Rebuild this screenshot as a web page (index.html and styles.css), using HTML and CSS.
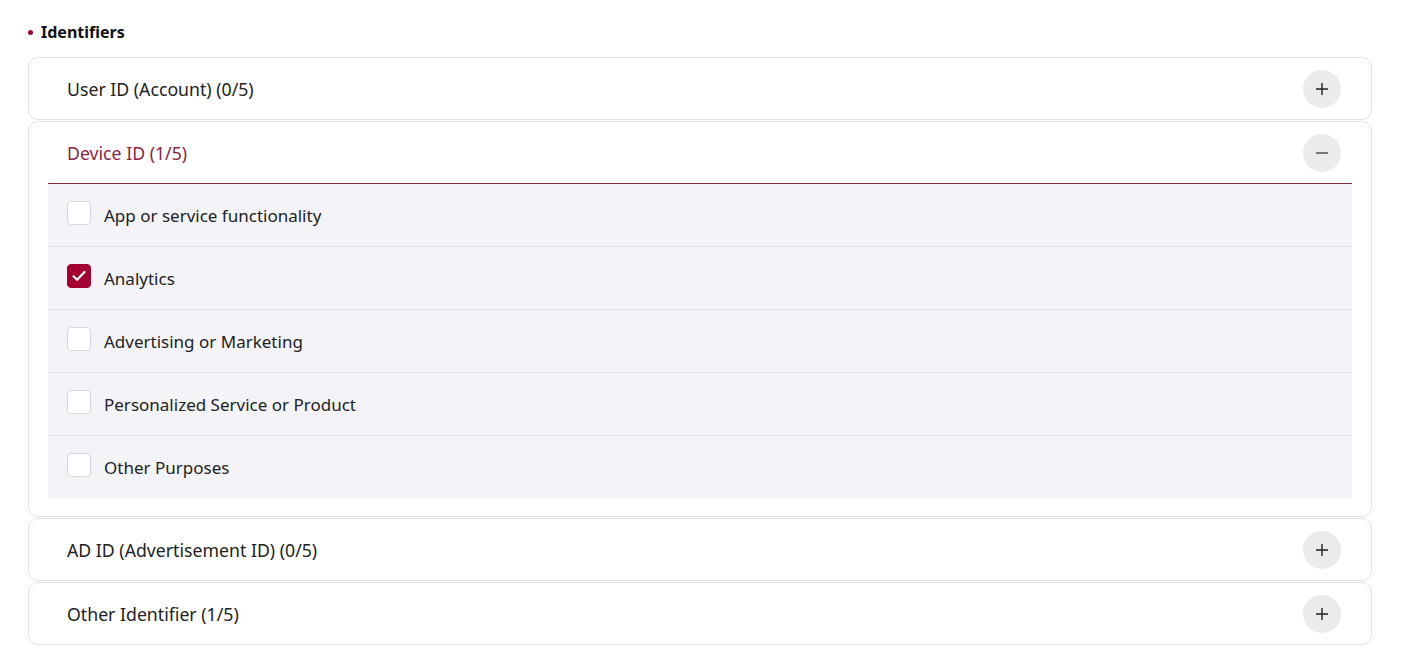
FILE: index.html
```html
<!DOCTYPE html>
<html lang="en">
  <head>
    <meta charset="UTF-8">
    <title>Identifiers</title>
    <link rel="stylesheet" href="styles.css">
  </head>
  <body>
    <div class="section">
      <h3 class="section-title">Identifiers</h3>

      <div class="acc-item">
        <div class="acc-head">
          <span class="acc-title">User ID (Account) (0/5)</span>
          <button class="acc-btn" type="button">
            <svg width="14" height="14" viewBox="0 0 14 14"><path d="M7 1v12M1 7h12" stroke="#222" stroke-width="1.4" fill="none"/></svg>
          </button>
        </div>
      </div>

      <div class="acc-item open">
        <div class="acc-head">
          <span class="acc-title">Device ID (1/5)</span>
          <button class="acc-btn" type="button">
            <svg width="14" height="14" viewBox="0 0 14 14"><path d="M1 7h12" stroke="#444" stroke-width="1.4" fill="none"/></svg>
          </button>
        </div>
        <ul class="acc-body">
          <li><span class="check"></span>App or service functionality</li>
          <li><span class="check checked">
            <svg width="18" height="18" viewBox="0 0 18 18"><path d="M3.5 9.3l3.6 3.4L14.5 5" stroke="#fff" stroke-width="2.2" fill="none" stroke-linecap="round" stroke-linejoin="round"/></svg>
          </span>Analytics</li>
          <li><span class="check"></span>Advertising or Marketing</li>
          <li><span class="check"></span>Personalized Service or Product</li>
          <li><span class="check"></span>Other Purposes</li>
        </ul>
      </div>

      <div class="acc-item">
        <div class="acc-head">
          <span class="acc-title">AD ID (Advertisement ID) (0/5)</span>
          <button class="acc-btn" type="button">
            <svg width="14" height="14" viewBox="0 0 14 14"><path d="M7 1v12M1 7h12" stroke="#222" stroke-width="1.4" fill="none"/></svg>
          </button>
        </div>
      </div>

      <div class="acc-item">
        <div class="acc-head">
          <span class="acc-title">Other Identifier (1/5)</span>
          <button class="acc-btn" type="button">
            <svg width="14" height="14" viewBox="0 0 14 14"><path d="M7 1v12M1 7h12" stroke="#222" stroke-width="1.4" fill="none"/></svg>
          </button>
        </div>
      </div>
    </div>
  </body>
</html>
```

FILE: styles.css
```css
body{
  margin: 0;
  padding: 0;
  font-family: "Noto Sans", "Open Sans", sans-serif;
  color: #111;
  background: #fff;
}

.section{
  padding: 20px 29px 0 28px;
}

.section-title{
  margin: 0 0 13px 0;
  padding-left: 13px;
  position: relative;
  font-size: 16px;
  font-weight: 700;
  line-height: 24px;
}

.section-title::before{
  content: '';
  position: absolute;
  left: 0;
  top: 10px;
  width: 5px;
  height: 5px;
  border-radius: 50%;
  background: #a50034;
}

.acc-item{
  border: 1px solid #e2e2e2;
  border-radius: 10px;
  margin-bottom: 1px;
  background: #fff;
}

.acc-head{
  display: flex;
  align-items: center;
  justify-content: space-between;
  height: 61px;
  padding: 0 30px 0 38px;
}

.acc-title{
  font-size: 17.7px;
  color: #222;
}

.acc-item.open .acc-title{
  color: #8c2443;
}

.acc-btn{
  width: 38px;
  height: 38px;
  border: 0;
  border-radius: 50%;
  background: #ebebeb;
  display: flex;
  align-items: center;
  justify-content: center;
  padding: 0;
}

.acc-body{
  list-style: none;
  margin: 0 19px 18px 19px;
  padding: 0;
  border-top: 1px solid #8a2a3e;
  background: #f4f4f8;
}

.acc-body li{
  display: flex;
  align-items: center;
  height: 62px;
  padding-left: 19px;
  font-size: 17px;
  color: #222;
  border-top: 1px solid #e2e2e6;
}

.acc-body li:first-child{
  border-top: 0;
}

.check{
  width: 22px;
  height: 22px;
  border: 1px solid #d8d8dc;
  border-radius: 4px;
  background: #fff;
  margin-right: 13px;
  margin-top: -4px;
  display: flex;
  align-items: center;
  justify-content: center;
}

.check.checked{
  background: #a50034;
  border-color: #a50034;
}
```
